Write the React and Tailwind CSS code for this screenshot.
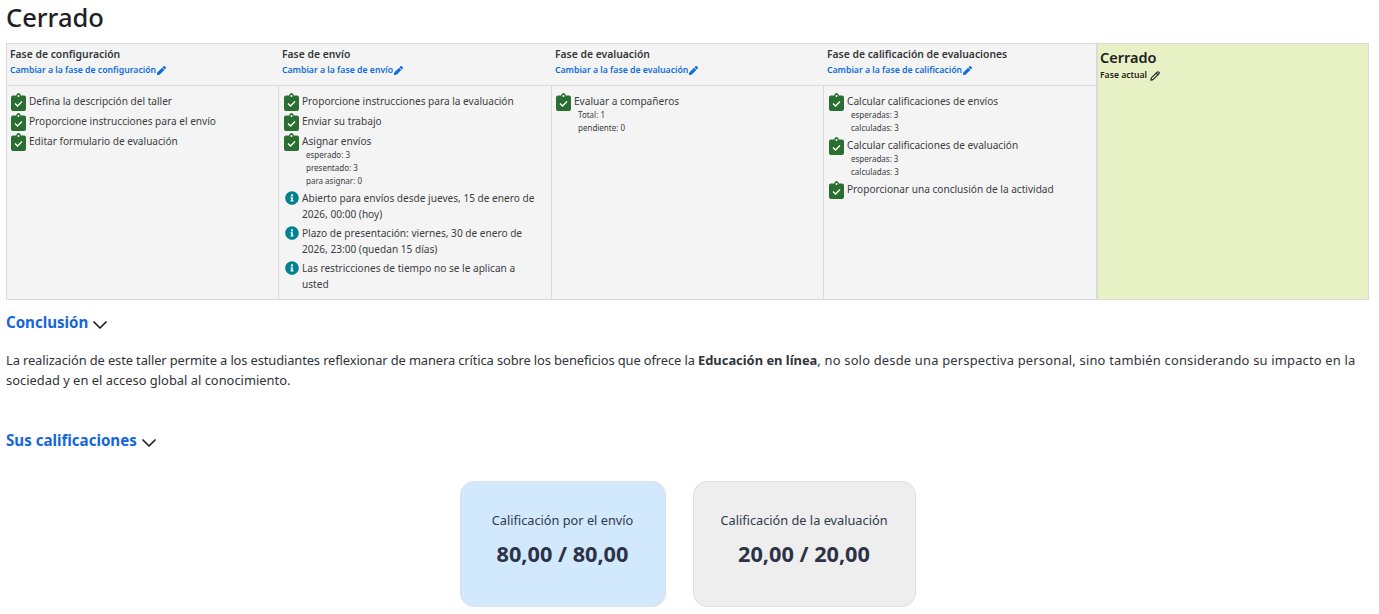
import React from 'react';
import { FaInfoCircle, FaPen } from 'react-icons/fa';
import { ChevronDown, Pencil } from 'lucide-react';

const Done = () => (
    <svg viewBox="0 0 15 18" className="w-[15px] h-[18px] shrink-0">
        <path d="M2 2.500h3.200C5.500 1 6.400 0 7.500 0s2 1 2.300 2.500H13a2 2 0 0 1 2 2V16a2 2 0 0 1-2 2H2a2 2 0 0 1-2-2V4.500a2 2 0 0 1 2-2z" fill="#2b6e31" />
        <circle cx="7.500" cy="3" r="1" fill="#fff" />
        <path d="M4 10.500l2.500 2.500L11 8.500" fill="none" stroke="#fff" strokeWidth="1.300" />
    </svg>
);

const Info = () => <FaInfoCircle className="w-[14px] h-[14px] mt-[1px] mx-[0.5px] shrink-0 text-[#00828f]" />;

const Task = ({ icon, text, details }) => (
    <li className="mb-[2px]">
        <div className="flex gap-[3px]">
            {icon === 'info' ? <Info /> : <Done />}
            <span className="leading-[16.4px] text-[#3a3d42]">{text}</span>
        </div>
        {details && (
            <ul className="pl-[22px] -mt-[3px] mb-[3px] text-[8px] leading-[13px] text-[#3a3d42]">
                {details.map((d) => <li key={d}>{d}</li>)}
            </ul>
        )}
    </li>
);

const phases = [
    {
        title: 'Fase de configuración',
        link: 'Cambiar a la fase de configuración',
        tasks: [
            { text: 'Defina la descripción del taller' },
            { text: 'Proporcione instrucciones para el envío' },
            { text: 'Editar formulario de evaluación' },
        ],
    },
    {
        title: 'Fase de envío',
        link: 'Cambiar a la fase de envío',
        tasks: [
            { text: 'Proporcione instrucciones para la evaluación' },
            { text: 'Enviar su trabajo' },
            { text: 'Asignar envíos', details: ['esperado: 3', 'presentado: 3', 'para asignar: 0'] },
            { icon: 'info', text: 'Abierto para envíos desde jueves, 15 de enero de 2026, 00:00 (hoy)' },
            { icon: 'info', text: 'Plazo de presentación: viernes, 30 de enero de 2026, 23:00 (quedan 15 días)' },
            { icon: 'info', text: 'Las restricciones de tiempo no se le aplican a usted' },
        ],
    },
    {
        title: 'Fase de evaluación',
        link: 'Cambiar a la fase de evaluación',
        tasks: [{ text: 'Evaluar a compañeros', details: ['Total: 1', 'pendiente: 0'] }],
    },
    {
        title: 'Fase de calificación de evaluaciones',
        link: 'Cambiar a la fase de calificación',
        tasks: [
            { text: 'Calcular calificaciones de envíos', details: ['esperadas: 3', 'calculadas: 3'] },
            { text: 'Calcular calificaciones de evaluación', details: ['esperadas: 3', 'calculadas: 3'] },
            { text: 'Proporcionar una conclusión de la actividad' },
        ],
    },
];

const Section = ({ title }) => (
    <h3 className="flex items-center h-[20px] text-[15.1px] leading-[20px] font-bold text-[#1565dc]">
        {title}
        <ChevronDown className="w-[24px] h-[24px] mt-[6px] text-[#1d2125]" strokeWidth={1.7} />
    </h3>
);

const GradeCard = ({ label, value, color, width }) => (
    <div className={`h-[126px] ${width} ${color} rounded-[14px] border border-[#dcdfe3] flex flex-col items-center pt-[28px]`}>
        <div className="text-[12.75px] leading-[20px] text-[#2f3a4c]">{label}</div>
        <div className="mt-[9px] text-[21.7px] leading-[30px] font-bold text-[#2c3347]">{value}</div>
    </div>
);

const App = () => {
    return (
        <div className="h-[614px] overflow-hidden bg-white px-[6px] text-[#1d2125] font-['Noto_Sans','Open_Sans',sans-serif]">
            <h2 className="h-[43px] text-[25.5px] leading-[34px] font-medium">Cerrado</h2>

            <div className="w-[1363px] h-[257px] grid grid-cols-[271px_273px_272px_273px_1fr] grid-rows-[42px_1fr] border border-[#d9dadc] bg-[#f4f4f4] text-[10.1px]">
                {phases.map((p, i) => (
                    <div key={p.title} className={`border-b border-[#d9dadc] pt-[3px] ${i > 0 ? 'pl-[4px]' : 'pl-[3px]'}`}>
                        <div className="text-[10.35px] leading-[15px] font-semibold text-[#33373d]">{p.title}</div>
                        <a className="flex items-center gap-[1px] mt-[1px] text-[8.7px] leading-[15px] font-semibold text-[#0f6cdf]">
                            {p.link}
                            <FaPen className="w-[9px] h-[9px]" />
                        </a>
                    </div>
                ))}
                <div className="row-span-2 border-l-2 border-[#d9dadc] bg-[#e7f1c3] pl-[2px] pt-[3px]">
                    <div className="text-[14.5px] leading-[20px] font-semibold text-[#1d2125]">Cerrado</div>
                    <div className="flex items-center gap-[3px] mt-[1px] text-[8.6px] leading-[15px] font-semibold text-[#1d2125]">
                        Fase actual
                        <Pencil className="w-[10px] h-[10px]" strokeWidth={2.6} />
                    </div>
                </div>
                {phases.map((p, i) => (
                    <ul key={p.title} className={`pr-[12px] pt-[7px] ${i > 0 ? 'border-l border-[#d9dadc]' : ''} ${i === 1 || i === 3 ? 'pl-[5px]' : 'pl-[4px]'}`}>
                        {p.tasks.map((t) => <Task key={t.text} {...t} />)}
                    </ul>
                ))}
            </div>

            <div className="mt-[12px]">
                <Section title="Conclusión" />
            </div>
            <p className="mt-[18px] text-[12.9px] leading-[20px] text-[#30343a]">
                <span className="tracking-[-0.115px]">La realización de este taller permite a los estudiantes reflexionar de manera crítica sobre los beneficios que ofrece la </span>
                <strong>Educación en línea</strong>
                <span className="tracking-[0.2px]">, no solo desde una perspectiva personal, sino también considerando su impacto en la</span>{' '}
                sociedad y en el acceso global al conocimiento.
            </p>
            <div className="mt-[40px]">
                <Section title="Sus calificaciones" />
            </div>

            <div className="mt-[31px] flex justify-center gap-[27px] pr-[4px]">
                <GradeCard label="Calificación por el envío" value="80,00 / 80,00" color="bg-[#d2e8fd]" width="w-[206px]" />
                <GradeCard label="Calificación de la evaluación" value="20,00 / 20,00" color="bg-[#eeeeee]" width="w-[223px]" />
            </div>
        </div>
    );
};

export default App;
